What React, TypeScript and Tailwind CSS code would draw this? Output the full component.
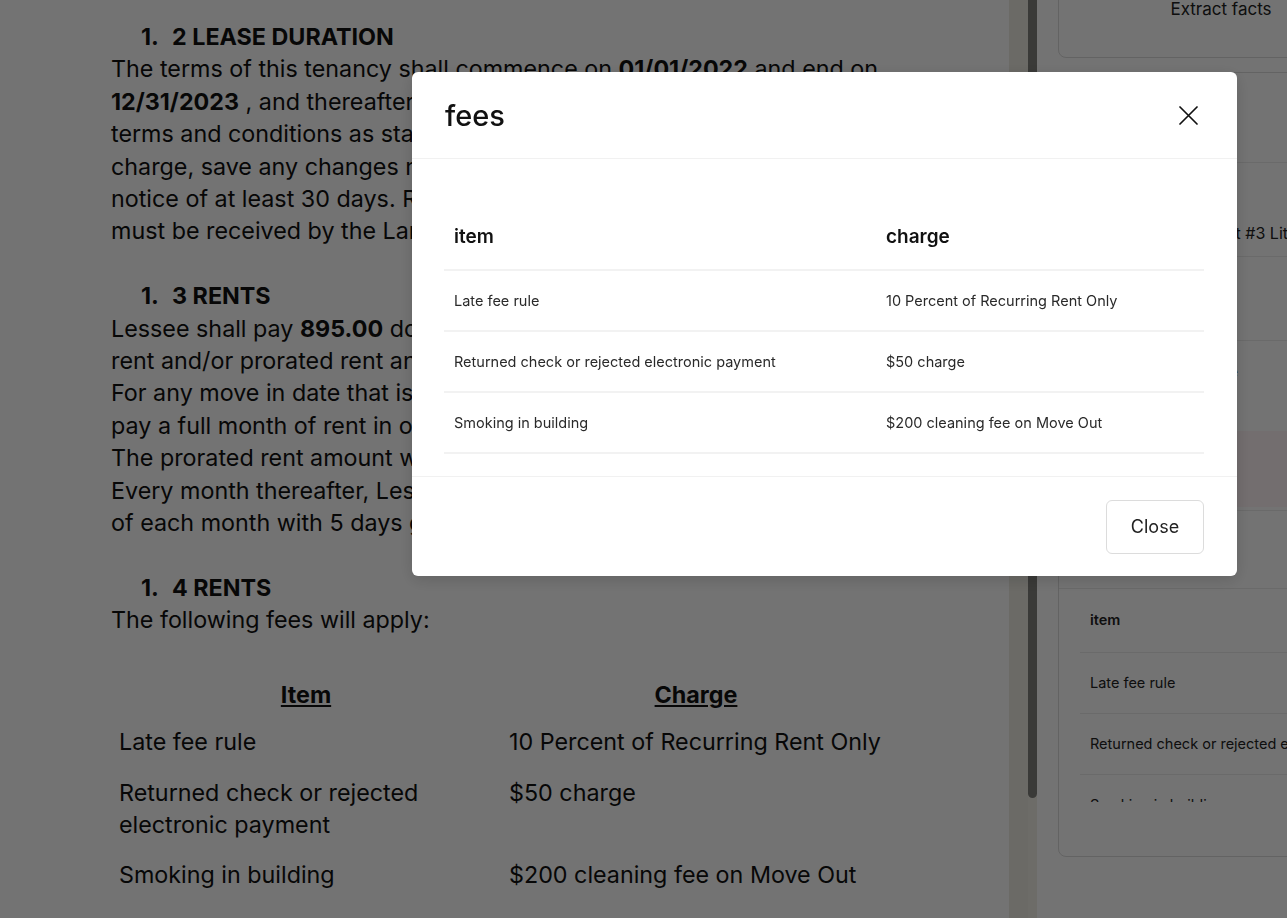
import React from 'react';

const fees = [
  { item: 'Late fee rule', charge: '10 Percent of Recurring Rent Only' },
  { item: 'Returned check or rejected electronic payment', charge: '$50 charge' },
  { item: 'Smoking in building', charge: '$200 cleaning fee on Move Out' },
];

const Heading: React.FC<{ num: string; title: string }> = ({ num, title }) => (
  <div className="pl-[30px] font-bold whitespace-nowrap">
    <span className="inline-block w-[31px]">1.</span>
    {num} {title}
  </div>
);

const Document: React.FC = () => (
  <div className="pl-[111px] pt-[21px] text-[23.3px] leading-[32.4px] text-[#111] whitespace-nowrap">
    <Heading num="2" title="LEASE DURATION" />
    <p>
      The terms of this tenancy shall commence on <b>01/01/2022</b> and end on
      <br />
      <b>12/31/2023</b> , and thereafter continue on a month-to-month basis with the
      <br />
      terms and conditions as stated in this agreement, at no additional
      <br />
      charge, save any changes made by the Landlord with written
      <br />
      notice of at least 30 days. Resident's notice to vacate
      <br />
      must be received by the Landlord in writing.
    </p>

    <div className="h-[32.4px]" />
    <Heading num="3" title="RENTS" />
    <p>
      Lessee shall pay <b>895.00</b> dollars per month as monthly
      <br />
      rent and/or prorated rent and deposit before move in.
      <br />
      For any move in date that is after the 15th, Lessee must
      <br />
      pay a full month of rent in order to take possession.
      <br />
      The prorated rent amount will be due with the next month.
      <br />
      Every month thereafter, Lessee shall pay rent on the 1st
      <br />
      of each month with 5 days grace period.
    </p>

    <div className="h-[32.4px]" />
    <Heading num="4" title="RENTS" />
    <p>The following fees will apply:</p>

    <table className="mt-[34px] w-[780px] border-collapse">
      <thead>
        <tr>
          <th className="w-[390px] px-[8px] pt-[8px] pb-[6px] font-bold underline text-center">Item</th>
          <th className="w-[390px] px-[8px] pt-[8px] pb-[6px] font-bold underline text-center">Charge</th>
        </tr>
      </thead>
      <tbody>
        <tr>
          <td className="px-[8px] py-[9px] align-top">Late fee rule</td>
          <td className="px-[8px] py-[9px] align-top">10 Percent of Recurring Rent Only</td>
        </tr>
        <tr>
          <td className="px-[8px] py-[9px] align-top">
            Returned check or rejected
            <br />
            electronic payment
          </td>
          <td className="px-[8px] py-[9px] align-top">$50 charge</td>
        </tr>
        <tr>
          <td className="px-[8px] py-[9px] align-top">Smoking in building</td>
          <td className="px-[8px] py-[9px] align-top">$200 cleaning fee on Move Out</td>
        </tr>
      </tbody>
    </table>
  </div>
);

const SidePanel: React.FC = () => (
  <div className="w-[347px] pl-[21px] text-[#222]">
    {/* top card, scrolled mostly out of view */}
    <div className="-mt-[40px] h-[98px] rounded-b-lg border border-[#dcdcdc] flex items-end justify-center pb-[35px]">
      <span className="text-[17px]">Extract facts</span>
    </div>

    <div className="mt-[14px] h-[785px] rounded-lg border border-[#dcdcdc] flex flex-col overflow-hidden">
      <div className="h-[90px] shrink-0 px-[21px] flex items-center border-b border-[#ebebeb]">
        <span className="text-[20px] font-semibold whitespace-nowrap">Extracted facts</span>
      </div>
      <div className="h-[94px] shrink-0 px-[21px] pt-[28px] border-b border-[#ebebeb] whitespace-nowrap">
        <div className="text-[13px] text-[#666]">address</div>
        <div className="text-[16px] mt-[10px]">1204 Sunset Ave Unit #3 Little Rock</div>
      </div>
      <div className="h-[84px] shrink-0 px-[21px] pt-[24px] border-b border-[#ebebeb] whitespace-nowrap">
        <div className="text-[13px] text-[#666]">lease term</div>
        <div className="text-[16px] mt-[6px]">01/01/2022</div>
      </div>
      <div className="h-[90px] shrink-0 px-[21px] pt-[20px] whitespace-nowrap">
        <div className="text-[14px]">Tenant must give notice</div>
      </div>
      <div className="h-[76px] shrink-0 bg-[#fff4f5]" />
      <div className="h-[4px] shrink-0 border-b border-[#ebebeb]" />
      <div className="h-[78px] shrink-0 px-[21px] pt-[30px] border-b border-[#ebebeb]">
        <span className="text-[16px] font-semibold">fees</span>
      </div>
      <div className="h-[213px] shrink-0 overflow-hidden px-[21px]">
        <table className="w-full border-collapse text-[14.5px] whitespace-nowrap">
          <thead>
            <tr className="h-[63px] border-b border-[#ebebeb]">
              <th className="px-[10px] text-left font-semibold">item</th>
            </tr>
          </thead>
          <tbody>
            {fees.map((f) => (
              <tr key={f.item} className="h-[61px] border-b border-[#ebebeb]">
                <td className="px-[10px]">{f.item}</td>
              </tr>
            ))}
          </tbody>
        </table>
      </div>
    </div>
  </div>
);

const FeesModal: React.FC = () => (
  <div className="fixed left-[412px] top-[72px] w-[825px] rounded-md bg-white shadow-[0_4px_16px_rgba(0,0,0,0.15)] text-[#111]">
    <div className="h-[87px] px-[33px] flex items-center justify-between border-b border-[#f1f1f1]">
      <h2 className="text-[29px] font-medium leading-none">fees</h2>
      <button className="w-[32px] h-[32px] flex items-center justify-center">
        <svg width="19" height="19" viewBox="0 0 19 19" fill="none" stroke="#111" strokeWidth="1.7" strokeLinecap="round">
          <path d="M1 1 L18 18 M18 1 L1 18" />
        </svg>
      </button>
    </div>

    <div className="px-[32px] pt-[45px] pb-[22px] border-b border-[#f1f1f1]">
      <table className="w-[760px] border-collapse">
        <thead>
          <tr className="h-[66px] border-b-2 border-[#f2f2f2]">
            <th className="w-[432px] px-[10px] pt-[2px] text-left text-[19px] font-semibold">item</th>
            <th className="px-[10px] pt-[2px] text-left text-[19px] font-semibold">charge</th>
          </tr>
        </thead>
        <tbody>
          {fees.map((f) => (
            <tr key={f.item} className="h-[61px] border-b-2 border-[#f2f2f2] text-[14.5px] text-[#2a2a2a]">
              <td className="px-[10px]">{f.item}</td>
              <td className="px-[10px]">{f.charge}</td>
            </tr>
          ))}
        </tbody>
      </table>
    </div>

    <div className="h-[99px] px-[33px] flex items-center justify-end">
      <button className="w-[98px] h-[54px] rounded-md border border-[#dcdcdc] text-[18px] text-[#222]">Close</button>
    </div>
  </div>
);

export default function App() {
  return (
    <div className="relative h-[918px] w-full overflow-hidden bg-white font-['Inter',sans-serif] flex">
      <main className="w-[1009px] shrink-0 overflow-hidden">
        <Document />
      </main>
      <div className="w-[19px] shrink-0 bg-[#edebe2]" />
      <div className="w-[9px] shrink-0 bg-[#f2f0e7]">
        <div className="h-[798px] rounded-b-full bg-[#81817c]" />
      </div>
      <aside className="flex-1 overflow-hidden">
        <SidePanel />
      </aside>

      <div className="fixed inset-0 bg-black/[0.55]" />
      <FeesModal />
    </div>
  );
}
